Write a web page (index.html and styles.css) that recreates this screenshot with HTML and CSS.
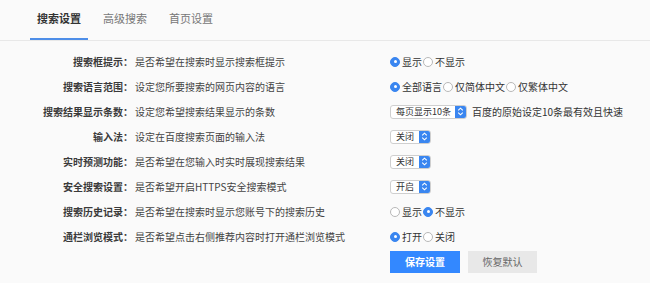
FILE: index.html
```html
<!DOCTYPE html>
<html lang="zh-CN">
<head>
    <meta charset="UTF-8">
    <title>搜索设置</title>
    <link rel="stylesheet" href="styles.css">
</head>
<body>
    <div class="tabs">
        <div class="tab active">搜索设置</div>
        <div class="tab">高级搜索</div>
        <div class="tab">首页设置</div>
    </div>

    <div class="form">
        <div class="row">
            <div class="label">搜索框提示：</div>
            <div class="desc">是否希望在搜索时显示搜索框提示</div>
            <div class="ctrl">
                <span class="radio on"></span><span class="opt">显示</span>
                <span class="radio"></span><span class="opt">不显示</span>
            </div>
        </div>
        <div class="row">
            <div class="label">搜索语言范围：</div>
            <div class="desc">设定您所要搜索的网页内容的语言</div>
            <div class="ctrl">
                <span class="radio on"></span><span class="opt">全部语言</span>
                <span class="radio"></span><span class="opt">仅简体中文</span>
                <span class="radio"></span><span class="opt">仅繁体中文</span>
            </div>
        </div>
        <div class="row">
            <div class="label">搜索结果显示条数：</div>
            <div class="desc">设定您希望搜索结果显示的条数</div>
            <div class="ctrl">
                <span class="select wide"><span class="val">每页显示10条</span><span class="arrow"><svg width="7" height="9" viewBox="0 0 7 9"><path d="M1.2 3.4 3.5 1.2 5.8 3.4M1.2 5.6 3.5 7.8 5.8 5.6" fill="none" stroke="#fff" stroke-width="1.1"/></svg></span></span>
                <span class="note">百度的原始设定10条最有效且快速</span>
            </div>
        </div>
        <div class="row">
            <div class="label">输入法：</div>
            <div class="desc">设定在百度搜索页面的输入法</div>
            <div class="ctrl">
                <span class="select"><span class="val">关闭</span><span class="arrow"><svg width="7" height="9" viewBox="0 0 7 9"><path d="M1.2 3.4 3.5 1.2 5.8 3.4M1.2 5.6 3.5 7.8 5.8 5.6" fill="none" stroke="#fff" stroke-width="1.1"/></svg></span></span>
            </div>
        </div>
        <div class="row">
            <div class="label">实时预测功能：</div>
            <div class="desc">是否希望在您输入时实时展现搜索结果</div>
            <div class="ctrl">
                <span class="select"><span class="val">关闭</span><span class="arrow"><svg width="7" height="9" viewBox="0 0 7 9"><path d="M1.2 3.4 3.5 1.2 5.8 3.4M1.2 5.6 3.5 7.8 5.8 5.6" fill="none" stroke="#fff" stroke-width="1.1"/></svg></span></span>
            </div>
        </div>
        <div class="row">
            <div class="label">安全搜索设置：</div>
            <div class="desc">是否希望开启HTTPS安全搜索模式</div>
            <div class="ctrl">
                <span class="select"><span class="val">开启</span><span class="arrow"><svg width="7" height="9" viewBox="0 0 7 9"><path d="M1.2 3.4 3.5 1.2 5.8 3.4M1.2 5.6 3.5 7.8 5.8 5.6" fill="none" stroke="#fff" stroke-width="1.1"/></svg></span></span>
            </div>
        </div>
        <div class="row">
            <div class="label">搜索历史记录：</div>
            <div class="desc">是否希望在搜索时显示您账号下的搜索历史</div>
            <div class="ctrl">
                <span class="radio"></span><span class="opt">显示</span>
                <span class="radio on"></span><span class="opt">不显示</span>
            </div>
        </div>
        <div class="row">
            <div class="label">通栏浏览模式：</div>
            <div class="desc">是否希望点击右侧推荐内容时打开通栏浏览模式</div>
            <div class="ctrl">
                <span class="radio on"></span><span class="opt">打开</span>
                <span class="radio"></span><span class="opt">关闭</span>
            </div>
        </div>

        <div class="buttons">
            <span class="btn save">保存设置</span>
            <span class="btn reset">恢复默认</span>
        </div>
    </div>
</body>
</html>
```

FILE: styles.css
```css
body {
    margin: 0;
    padding: 0;
    background-color: #fafafa;
    font-family: "Noto Sans CJK SC", "Noto Sans", sans-serif;
    color: #333;
}

.tabs {
    display: flex;
    height: 40px;
    padding-left: 30px;
    border-bottom: 1px solid #e8e8e8;
    box-sizing: content-box;
}

.tab {
    padding: 0 7px;
    margin-right: 8px;
    font-size: 11px;
    line-height: 36px;
    height: 38px;
    color: #777;
    border-bottom: 2px solid transparent;
}

.tab.active {
    color: #333;
    font-weight: bold;
    border-bottom-color: #4e8ee8;
}

.form {
    padding-top: 8px;
}

.row {
    display: flex;
    align-items: center;
    height: 25px;
    font-size: 10px;
}

.label {
    width: 133px;
    text-align: right;
    font-weight: bold;
    color: #3a3a3a;
    flex-shrink: 0;
}

.desc {
    width: 255px;
    padding-left: 2px;
    color: #444;
    flex-shrink: 0;
}

.ctrl {
    display: flex;
    align-items: center;
    color: #333;
}

.radio {
    width: 10px;
    height: 10px;
    box-sizing: border-box;
    border-radius: 50%;
    border: 1px solid #b8b8b8;
    background-color: #fff;
    margin-right: 2px;
    position: relative;
}

.radio.on {
    border-color: #3a86f0;
    background-color: #3a86f0;
}

.radio.on::after {
    content: "";
    position: absolute;
    left: 2.5px;
    top: 2.5px;
    width: 3px;
    height: 3px;
    border-radius: 50%;
    background-color: #fff;
}

.opt {
    margin-right: 1px;
}

.select {
    display: flex;
    height: 14px;
    width: 41px;
    box-sizing: border-box;
    border: 1px solid #cfcfcf;
    border-radius: 3px;
    background-color: #fff;
    overflow: hidden;
}

.select.wide {
    width: 77px;
}

.select .val {
    flex: 1;
    font-size: 9px;
    line-height: 12px;
    padding-left: 5px;
    color: #333;
}

.select .arrow {
    width: 11px;
    background-color: #3a86f0;
    display: flex;
    align-items: center;
    justify-content: center;
}

.note {
    margin-left: 5px;
}

.buttons {
    display: flex;
    padding-left: 390px;
    margin-top: 2px;
}

.btn {
    height: 22px;
    line-height: 22px;
    font-size: 10px;
    text-align: center;
}

.save {
    width: 70px;
    background-color: #3388ff;
    color: #fff;
    font-weight: bold;
}

.reset {
    width: 69px;
    margin-left: 8px;
    background-color: #e8e8e8;
    color: #666;
}
```
